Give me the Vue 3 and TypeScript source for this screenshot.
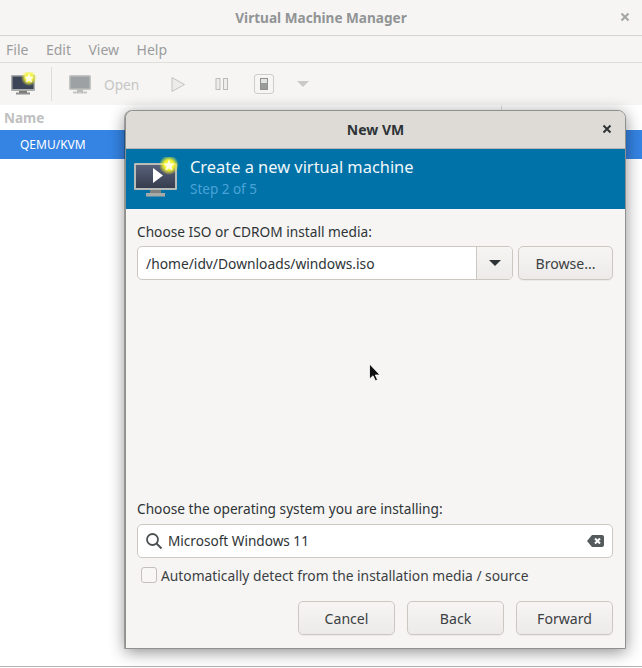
<script setup lang="ts">
const menus: string[] = ['File', 'Edit', 'View', 'Help']
</script>

<template>
  <div class="win">
    <header class="titlebar">
      <span class="title">Virtual Machine Manager</span>
      <svg class="close" width="10" height="10" viewBox="0 0 10 10"><path d="M1.500 1.500l7 7M8.500 1.500l-7 7" stroke="#a3a5a5" stroke-width="2" /></svg>
    </header>
    <nav class="menubar">
      <span v-for="m in menus" :key="m">{{ m }}</span>
    </nav>
    <div class="toolbar">
      <div class="tool first">
        <svg width="26" height="24" viewBox="0 0 26 24">
          <defs>
            <radialGradient id="glowSmall">
              <stop offset="0.45" stop-color="#f4f43a" />
              <stop offset="1" stop-color="#f4f43a" stop-opacity="0" />
            </radialGradient>
          </defs>
          <rect x="0" y="3" width="24" height="16" rx="1" fill="#a9acaa" />
          <rect x="1.500" y="4.500" width="21" height="12.500" fill="#3c4558" />
          <rect x="8" y="19" width="8" height="2" fill="#777" />
          <rect x="5" y="20.500" width="14" height="2" fill="#8e8e8c" />
          <circle cx="18" cy="6" r="8" fill="url(#glowSmall)" />
          <path d="M18 1.200l1.500 3.200 3.400.4-2.500 2.300.7 3.400-3.100-1.700-3 1.700.6-3.400-2.500-2.300 3.400-.4z" fill="#fffde0" />
        </svg>
      </div>
      <i class="sep"></i>
      <div class="tool open">
        <svg width="24" height="22" viewBox="0 0 24 22">
          <rect x="1" y="2" width="22" height="15" rx="1.500" fill="#c3c5c3" />
          <rect x="2.500" y="3.500" width="19" height="12" fill="#9da1a4" />
          <rect x="9" y="17" width="6" height="2" fill="#b5b5b3" />
          <rect x="5" y="18.500" width="14" height="2" fill="#c5c5c3" />
        </svg>
        <span>Open</span>
      </div>
      <svg class="play" width="16" height="17" viewBox="0 0 16 17"><path d="M2 1.500l12.500 7-12.500 7z" fill="#ecebe9" stroke="#c2c4c2" /></svg>
      <svg class="pause" width="14" height="14" viewBox="0 0 14 14"><rect x="1" y="1.500" width="4" height="11" fill="#eeedeb" stroke="#b9bbb9" /><rect x="8.500" y="1.500" width="4" height="11" fill="#eeedeb" stroke="#b9bbb9" /></svg>
      <span class="stopbtn"><svg width="8" height="12" viewBox="0 0 8 12"><rect x=".5" y=".5" width="7" height="11" fill="#e3e3e1" stroke="#8f9190" /><rect x="1" y="5" width="6" height="6" fill="#9a9c9b" /></svg></span>
      <i class="drop"></i>
    </div>
    <section class="list">
      <div class="listhead"><span class="colname">Name</span></div>
      <div class="listrow"><span>QEMU/KVM</span></div>
    </section>
    <div class="foot"></div>

    <div class="dialog">
      <header class="dhead">
        <span class="dtitle">New VM</span>
        <svg class="dclose" width="10" height="10" viewBox="0 0 10 10"><path d="M1.500 1.500l7 7M8.500 1.500l-7 7" stroke="#2e3436" stroke-width="2" /></svg>
      </header>
      <div class="banner">
        <svg class="bicon" width="46" height="42" viewBox="0 0 46 42">
          <defs>
            <radialGradient id="glowBig">
              <stop offset="0.5" stop-color="#f2f22e" />
              <stop offset="1" stop-color="#f2f22e" stop-opacity="0" />
            </radialGradient>
            <linearGradient id="screenFill" x1="0" y1="0" x2="0" y2="1">
              <stop offset="0" stop-color="#59617a" />
              <stop offset="1" stop-color="#363d4e" />
            </linearGradient>
          </defs>
          <rect x="0" y="6" width="43" height="27" rx="1" fill="#b9bbb9" />
          <rect x="2" y="8" width="39" height="23" fill="url(#screenFill)" />
          <path d="M19 11l10 7.500-10 7.500z" fill="#fff" />
          <rect x="16" y="33" width="11" height="3" fill="#7f8180" />
          <rect x="12" y="36" width="19" height="3.500" fill="#a8aaa8" />
          <circle cx="35" cy="8" r="10" fill="url(#glowBig)" />
          <path d="M35 2.500l1.700 3.700 4 .5-3 2.700.8 4-3.500-2-3.500 2 .8-4-3-2.700 4-.5z" fill="#fffde0" />
        </svg>
        <div class="btext">
          <div class="bmain">Create a new virtual machine</div>
          <div class="bsub">Step 2 of 5</div>
        </div>
      </div>
      <div class="body">
        <label class="lbl first">Choose ISO or CDROM install media:</label>
        <div class="isorow">
          <div class="combo">
            <span class="cinput">/home/idv/Downloads/windows.iso</span>
            <span class="carrow"><i></i></span>
          </div>
          <button class="btn browse">Browse...</button>
        </div>
        <div class="spacer">
          <svg class="cursor" width="14" height="20" viewBox="0 0 14 20"><path d="M1.500 1v15l3.500-3.200 2.400 5 2.200-1-2.300-4.800h4.700z" fill="#111" stroke="#fff" stroke-width=".8" /></svg>
        </div>
        <label class="lbl">Choose the operating system you are installing:</label>
        <div class="search">
          <svg width="18" height="18" viewBox="0 0 18 18"><circle cx="7.500" cy="7.500" r="5.500" fill="none" stroke="#4c5153" stroke-width="1.800" /><path d="M11.500 11.500l5 5" stroke="#4c5153" stroke-width="2" /></svg>
          <span class="stext">Microsoft Windows 11</span>
          <svg class="clear" width="17" height="12" viewBox="0 0 17 12"><path d="M5 0h10a2 2 0 0 1 2 2v8a2 2 0 0 1-2 2H5L0 6z" fill="#555a5c" /><path d="M8 3.500l5 5M13 3.500l-5 5" stroke="#fff" stroke-width="2" /></svg>
        </div>
        <div class="check">
          <span class="box"></span>
          <span>Automatically detect from the installation media / source</span>
        </div>
        <div class="actions">
          <button class="btn act">Cancel</button>
          <button class="btn act">Back</button>
          <button class="btn act">Forward</button>
        </div>
      </div>
    </div>
  </div>
</template>

<style scoped>
.win {
  position: relative;
  width: 642px;
  height: 668px;
  overflow: hidden;
  display: flex;
  flex-direction: column;
  background: #fff;
  font-family: "Noto Sans", sans-serif;
  font-size: 14px;
  color: #2e3436;
}
.titlebar {
  height: 35px;
  flex: none;
  display: flex;
  align-items: center;
  justify-content: center;
  position: relative;
  background: #f6f5f4;
  border-bottom: 1px solid #d6d4d1;
}
.title { font-weight: 700; color: #919494; font-size: 13.600px; }
.close { position: absolute; right: 12px; top: 12px; }
.menubar {
  height: 26px;
  flex: none;
  display: flex;
  align-items: center;
  gap: 17.500px;
  padding-left: 6px;
  background: #f6f5f4;
  border-bottom: 1px solid #dfdedb;
  color: #9b9d9d;
  font-size: 14px;
}
.toolbar {
  height: 42px;
  flex: none;
  display: flex;
  align-items: center;
  background: #f6f5f4;
  color: #c5c6c5;
}
.tool { display: flex; align-items: center; }
.tool.first { margin-left: 11px; }
.sep { width: 1px; height: 34px; background: #dedddb; margin: 0 16px 0 14px; }
.open span { margin-left: 12px; font-size: 13.700px; }
.play { margin-left: 31px; }
.pause { margin-left: 29px; }
.stopbtn {
  margin-left: 25px;
  width: 18px;
  height: 18px;
  border: 1px solid #cfcdca;
  border-radius: 3px;
  display: flex;
  align-items: center;
  justify-content: center;
}
.drop {
  margin-left: 23px;
  border-left: 6px solid transparent;
  border-right: 6px solid transparent;
  border-top: 6px solid #c8c9c8;
}
.list { flex: 1; background: #fff; }
.listhead {
  height: 25px;
  display: flex;
  align-items: stretch;
}
.colname {
  width: 497px;
  padding-left: 4px;
  display: flex;
  align-items: center;
  border-right: 1px solid #e4e3e1;
  font-weight: 700;
  color: #bfc0c0;
  font-size: 13.500px;
}
.listrow {
  height: 29px;
  display: flex;
  align-items: center;
  padding-left: 20px;
  background: #3584e4;
  color: #fff;
  font-size: 12px;
}
.foot { height: 1px; flex: none; background: #b4b3b1; margin-bottom: 1px; }
.dialog {
  position: absolute;
  left: 125px;
  top: 110px;
  width: 501px;
  height: 539px;
  box-sizing: border-box;
  border: 1px solid #8f918f;
  border-radius: 8px 8px 0 0;
  background: #f6f5f4;
  box-shadow: -1px 0 0 rgba(0, 0, 0, .25), 0 3px 16px rgba(0, 0, 0, .45);
  display: flex;
  flex-direction: column;
}
.dhead {
  height: 38px;
  box-sizing: border-box;
  flex: none;
  position: relative;
  display: flex;
  align-items: center;
  justify-content: center;
  background: #dedbd7;
  border-radius: 7px 7px 0 0;
  border-bottom: 1px solid #b9b6b2;
}
.dtitle { font-weight: 700; color: #2e3436; font-size: 14px; }
.dclose { position: absolute; right: 13px; top: 13px; }
.banner {
  height: 60px;
  flex: none;
  display: flex;
  align-items: center;
  background: #0072a8;
}
.bicon { margin-left: 8px; margin-top: -2px; }
.btext { margin-left: 10px; margin-top: -2px; }
.bmain { font-size: 16.400px; line-height: 22px; color: #f2f7fa; }
.bsub { font-size: 13.500px; line-height: 22px; color: #4aa3d8; }
.body {
  flex: 1;
  display: flex;
  flex-direction: column;
  padding: 0 12px 13px 11px;
  min-height: 0;
}
.lbl { font-size: 13.700px; line-height: 19px; color: #2e3436; flex: none; }
.lbl.first { margin-top: 13px; }
.isorow { display: flex; gap: 5px; margin-top: 5px; flex: none; }
.combo {
  flex: 1;
  height: 34px;
  box-sizing: border-box;
  display: flex;
  border: 1px solid #cdc7c2;
  border-radius: 5px;
  background: #fff;
  overflow: hidden;
}
.cinput { flex: 1; padding-left: 8px; line-height: 33px; font-size: 13.800px; }
.carrow {
  width: 35px;
  display: flex;
  align-items: center;
  justify-content: center;
  border-left: 1px solid #cdc7c2;
  background: linear-gradient(#f6f5f4, #edebe9);
}
.carrow i {
  border-left: 6px solid transparent;
  border-right: 6px solid transparent;
  border-top: 6px solid #2e3436;
}
.btn {
  box-sizing: border-box;
  height: 34px;
  border: 1px solid #cdc7c2;
  border-radius: 5px;
  background: linear-gradient(#f6f5f4, #edebe9);
  color: #3b4042;
  font-family: inherit;
  font-size: 14.100px;
  padding: 0;
  box-shadow: 0 1px 1px rgba(0, 0, 0, .05);
}
.browse { width: 95px; }
.spacer { flex: 1; position: relative; }
.cursor { position: absolute; left: 231px; top: 83px; }
.search {
  flex: none;
  height: 34px;
  margin-top: 6px;
  box-sizing: border-box;
  display: flex;
  align-items: center;
  border: 1px solid #cdc7c2;
  border-radius: 5px;
  background: #fff;
  padding: 0 8px 0 7px;
}
.stext { flex: 1; margin: -1px 0 0 5px; font-size: 13.600px; }
.check {
  flex: none;
  display: flex;
  align-items: center;
  gap: 4px;
  height: 26px;
  margin-top: 4px;
  padding-left: 4px;
  font-size: 13.800px;
  color: #3b4042;
}
.box {
  width: 14px;
  height: 14px;
  border: 1px solid #c4bfba;
  border-radius: 3px;
  background: #f8f7f6;
}
.actions {
  flex: none;
  display: flex;
  justify-content: flex-end;
  gap: 12px;
  margin-top: 13px;
}
.act { width: 97px; }
</style>

<style>
html, body { margin: 0; background: #fff; }
</style>
